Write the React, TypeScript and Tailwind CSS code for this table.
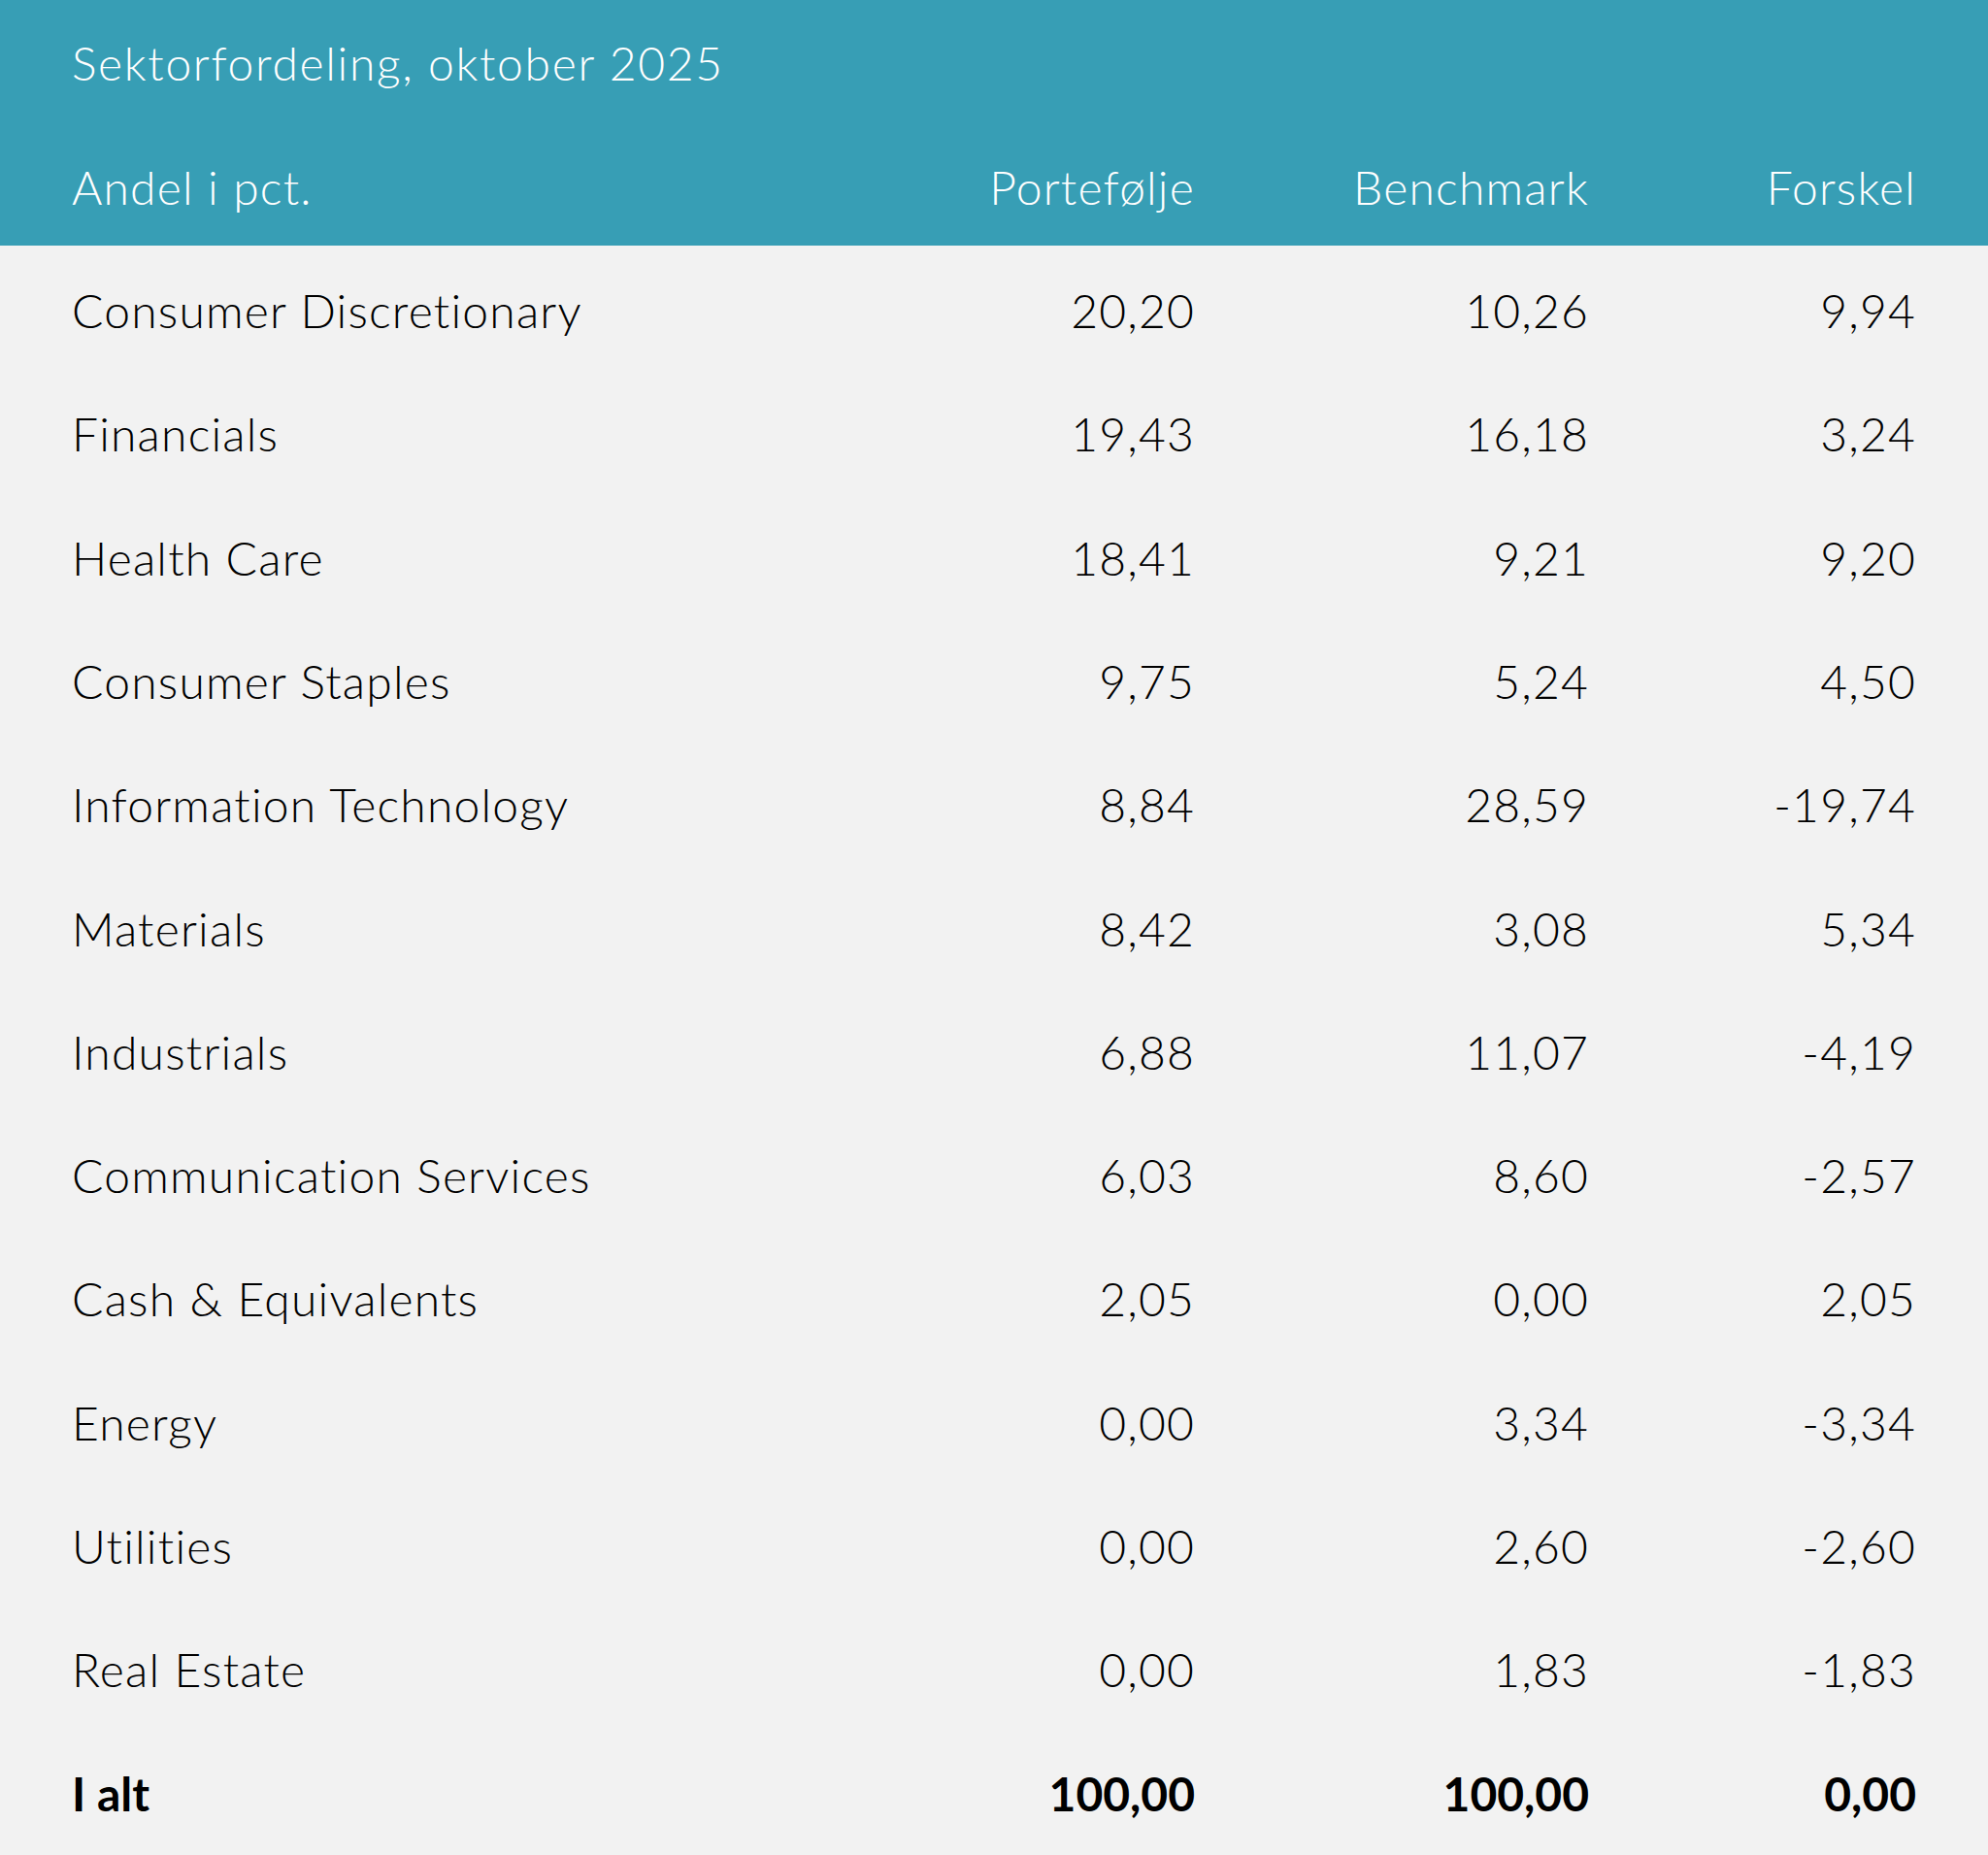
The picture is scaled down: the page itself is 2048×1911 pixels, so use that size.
import React from 'react';

type Row = {
    name: string;
    portfolio: string;
    benchmark: string;
    diff: string;
};

const ROWS: Row[] = [
    { name: 'Consumer Discretionary', portfolio: '20,20', benchmark: '10,26', diff: '9,94' },
    { name: 'Financials', portfolio: '19,43', benchmark: '16,18', diff: '3,24' },
    { name: 'Health Care', portfolio: '18,41', benchmark: '9,21', diff: '9,20' },
    { name: 'Consumer Staples', portfolio: '9,75', benchmark: '5,24', diff: '4,50' },
    { name: 'Information Technology', portfolio: '8,84', benchmark: '28,59', diff: '-19,74' },
    { name: 'Materials', portfolio: '8,42', benchmark: '3,08', diff: '5,34' },
    { name: 'Industrials', portfolio: '6,88', benchmark: '11,07', diff: '-4,19' },
    { name: 'Communication Services', portfolio: '6,03', benchmark: '8,60', diff: '-2,57' },
    { name: 'Cash & Equivalents', portfolio: '2,05', benchmark: '0,00', diff: '2,05' },
    { name: 'Energy', portfolio: '0,00', benchmark: '3,34', diff: '-3,34' },
    { name: 'Utilities', portfolio: '0,00', benchmark: '2,60', diff: '-2,60' },
    { name: 'Real Estate', portfolio: '0,00', benchmark: '1,83', diff: '-1,83' },
];

const GRID = 'grid grid-cols-[1fr_400px_406px_337px] items-center';

export default function App() {
    return (
        <div className="min-h-[1911px] w-full bg-[#f2f2f2] font-['Lato','Open_Sans',sans-serif] text-[48px] leading-[1.2] font-light tracking-[0.025em] text-black [font-variant-ligatures:none]">
            {/* Header band */}
            <div className="h-[253px] bg-[#379eb5] px-[74px] pt-[36px] text-white">
                <div className="tracking-[0.035em]">Sektorfordeling, oktober 2025</div>
                <div className={`${GRID} mt-[70px]`}>
                    <div>Andel i pct.</div>
                    <div className="text-right">Portefølje</div>
                    <div className="text-right">Benchmark</div>
                    <div className="text-right">Forskel</div>
                </div>
            </div>

            {/* Rows */}
            <div className="px-[74px] pt-[3px]">
                {ROWS.map((row) => (
                    <div key={row.name} className={`${GRID} h-[127.33px]`}>
                        <div>{row.name}</div>
                        <div className="text-right">{row.portfolio}</div>
                        <div className="text-right">{row.benchmark}</div>
                        <div className="text-right">{row.diff}</div>
                    </div>
                ))}
                <div className={`${GRID} h-[127.33px] font-bold tracking-normal`}>
                    <div>I alt</div>
                    <div className="text-right">100,00</div>
                    <div className="text-right">100,00</div>
                    <div className="text-right">0,00</div>
                </div>
            </div>
        </div>
    );
}
